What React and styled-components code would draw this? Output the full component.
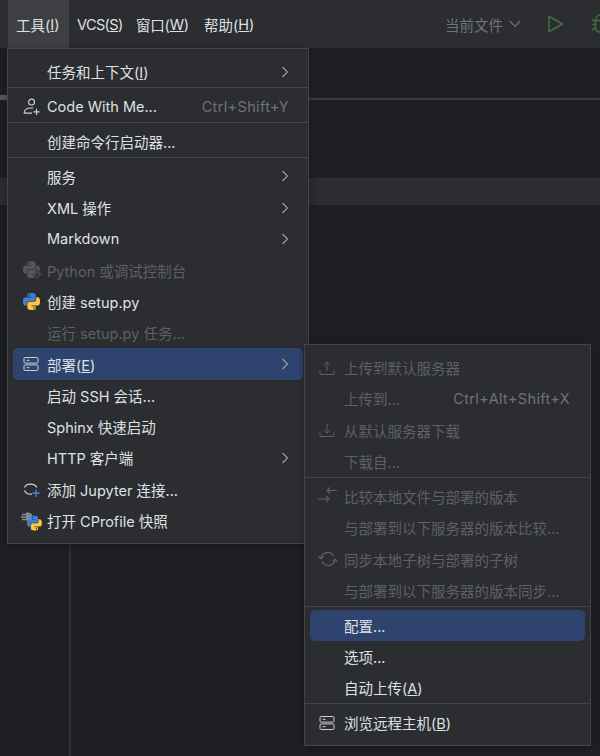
import React from 'react';
import styled, { createGlobalStyle } from 'styled-components';

const Global = createGlobalStyle`
  html, body { margin: 0; padding: 0; background: #1e1f22; }
  * { box-sizing: border-box; }
`;

const Page = styled.div`
  position: relative;
  width: 600px;
  height: 756px;
  overflow: hidden;
  display: flex;
  flex-direction: column;
  background: #1e1f22;
  font-family: "Inter", "Noto Sans CJK SC", sans-serif;
  font-size: 14.5px;
  color: #dfe1e5;
`;

const TitleBar = styled.header`
  flex: none;
  height: 48px;
  display: flex;
  align-items: stretch;
  padding-left: 8px;
  background: #2b2d30;
`;

const MenuTab = styled.div`
  flex: none;
  width: ${p => p.$width}px;
  display: flex;
  align-items: center;
  padding-left: 8px;
  letter-spacing: ${p => p.$tight || 0}px;
  background: ${p => (p.$active ? '#3d3f43' : 'transparent')};
  white-space: nowrap;
`;

const Toolbar = styled.div`
  margin-left: auto;
  display: flex;
  align-items: center;
  flex: none;
  width: 339px;
  margin-right: -184px;
`;

const RunTarget = styled.span`
  color: #6f737a;
  margin-right: 6px;
`;

const ToolIcon = styled.svg`
  flex: none;
  margin-left: ${p => p.$gap || 0}px;
`;

const Workspace = styled.main`
  flex: 1;
  display: flex;
  flex-direction: column;
  min-height: 0;
`;

const TabHeader = styled.div`
  flex: none;
  height: 52px;
  display: flex;
  align-items: flex-end;
`;

const HeaderNub = styled.div`
  width: 8px;
  height: 5px;
  background: #55575b;
`;

const HeaderRule = styled.div`
  flex: 1;
  height: 2px;
  background: #393b40;
`;

const EditorGap = styled.div`
  flex: none;
  height: 78px;
`;

const Band = styled.div`
  flex: none;
  height: 27px;
  background: #2b2d30;
`;

const Lower = styled.div`
  flex: 1;
  display: flex;
`;

const Rail = styled.div`
  width: 71px;
  border-right: 2px solid #2f3135;
`;

const Popup = styled.div`
  position: absolute;
  left: ${p => p.$left}px;
  top: ${p => p.$top}px;
  width: ${p => p.$width}px;
  padding: 7px 5px 7px;
  background: #2b2d30;
  border: 1px solid #43454a;
  box-shadow: 0 2px 8px rgba(0, 0, 0, 0.25);
`;

const Row = styled.div`
  height: 31.3px;
  display: flex;
  align-items: center;
  padding: 0 ${p => (p.$inset ? 15 : 14)}px 0 ${p => (p.$inset ? 9 : 10)}px;
  border-radius: 5px;
  white-space: nowrap;
  background: ${p => (p.$selected ? '#2e436e' : 'transparent')};
  color: ${p => (p.$disabled ? '#5d6066' : '#dfe1e5')};
`;

const IconSlot = styled.span`
  flex: none;
  width: ${p => p.$width}px;
  display: flex;
  align-items: center;
`;

const Shortcut = styled.span`
  margin-left: auto;
  color: #6f737a;
  letter-spacing: 0.35px;
`;

const Arrow = styled.svg`
  margin-left: auto;
  flex: none;
`;

const Separator = styled.div`
  height: 3.6px;
  margin: 0 -5px;
  border-top: 1.6px solid #43454a;
`;

const pyTop = 'M14.25.18l.9.2.73.26.59.3.45.32.34.34.25.34.16.33.1.3.04.26.02.2-.01.13V8.5l-.05.63-.13.55-.21.46-.26.38-.3.31-.33.25-.35.19-.35.14-.33.1-.3.07-.26.04-.21.02H8.77l-.69.05-.59.14-.5.22-.41.27-.33.32-.27.35-.2.36-.15.37-.1.35-.07.32-.04.27-.02.21v3.06H3.17l-.21-.03-.28-.07-.32-.12-.35-.18-.36-.26-.36-.36-.35-.46-.32-.59-.28-.73-.21-.88-.14-1.05-.05-1.23.06-1.22.16-1.04.24-.87.32-.71.36-.57.4-.44.42-.33.42-.24.4-.16.36-.1.32-.05.24-.01h.16l.06.01h8.16v-.83H6.18l-.01-2.75-.02-.37.05-.34.11-.31.17-.28.25-.26.31-.23.38-.2.44-.18.51-.15.58-.12.64-.1.71-.06.77-.04.84-.02 1.27.05zm-6.3 1.98l-.23.33-.08.41.08.41.23.34.33.22.41.09.41-.09.33-.22.23-.34.08-.41-.08-.41-.23-.33-.33-.22-.41-.09-.41.09z';
const pyBottom = 'M21.04 6.11l.28.06.32.12.35.18.36.27.36.35.35.47.32.59.28.73.21.88.14 1.04.05 1.23-.06 1.23-.16 1.04-.24.86-.32.71-.36.57-.4.45-.42.33-.42.24-.4.16-.36.09-.32.05-.24.02-.16-.01h-8.22v.82h5.84l.01 2.76.02.36-.05.34-.11.31-.17.29-.25.25-.31.24-.38.2-.44.17-.51.15-.58.13-.64.09-.71.07-.77.04-.84.01-1.27-.04-1.07-.14-.9-.2-.73-.25-.59-.3-.45-.33-.34-.34-.25-.34-.16-.33-.1-.3-.04-.25-.02-.2.01-.13v-5.34l.05-.64.13-.54.21-.46.26-.38.3-.32.33-.24.35-.2.35-.14.33-.1.3-.06.26-.04.21-.02.13-.01h5.84l.69-.05.59-.14.5-.21.41-.28.33-.32.27-.35.2-.36.15-.36.1-.35.07-.32.04-.28.02-.21V6.07h2.09l.14.01zm-6.47 14.25l-.23.33-.08.41.08.41.23.33.33.23.41.08.41-.08.33-.23.23-.33.08-.41-.08-.41-.23-.33-.33-.23-.41-.08-.41.08z';

const Svg = ({ size = 16, children, ...rest }) => (
  <svg width={size} height={size} viewBox="0 0 16 16" fill="none" {...rest}>{children}</svg>
);

const Python = ({ blue = '#3f7fd6', yellow = '#fcc63f' }) => (
  <svg width="17" height="17" viewBox="0 0 24 24">
    <path d={pyTop} fill={blue} />
    <path d={pyBottom} fill={yellow} />
  </svg>
);

const PythonConsole = () => (
  <svg width="19" height="18" viewBox="0 0 27 25">
    <path d={pyTop} fill="#55575c" />
    <path d={pyBottom} fill="#55575c" />
    <path d="M19 13l6 5.5-6 5.5" stroke="#2b2d30" strokeWidth="4" fill="none" />
    <path d="M19 13l6 5.5-6 5.5" stroke="#55575c" strokeWidth="1.6" fill="none" />
  </svg>
);

const UserAdd = () => (
  <Svg size={18}>
    <circle cx="7.6" cy="3.6" r="2.6" stroke="#ced0d6" strokeWidth="1.05" />
    <path d="M1 13.5c0-2.9 2.5-4.6 5.6-4.6h2.6M1 13.5h7" stroke="#ced0d6" strokeWidth="1.05" />
    <path d="M12 9.5v5.5M9.3 12.3h5.5" stroke="#ced0d6" strokeWidth="1.05" />
  </Svg>
);

const Server = () => (
  <Svg>
    <rect x="1" y="1.5" width="14" height="5.6" rx="1.2" stroke="#ced0d6" />
    <rect x="1" y="8.9" width="14" height="5.6" rx="1.2" stroke="#ced0d6" />
    <path d="M3.5 4.3h3M3.5 11.7h3" stroke="#ced0d6" />
  </Svg>
);

const dim = '#5d6066';

const Upload = () => (
  <Svg>
    <path d="M8 11V2M4.5 5.3L8 1.8l3.5 3.5M1 10.5v4h14v-4" stroke={dim} />
  </Svg>
);

const Download = () => (
  <Svg>
    <path d="M8 1.5v9.5M4.5 7.7L8 11.2l3.5-3.5M1 10.5v4h14v-4" stroke={dim} />
  </Svg>
);

const ShiftedIcon = styled.svg`
  margin-left: ${p => p.$shift}px;
`;

const Compare = () => (
  <ShiftedIcon $shift={-1} width="20" height="18" viewBox="0 0 20 18" fill="none">
    <path d="M9 3.5h10M12 .5l-3 3 3 3" stroke={dim} strokeWidth="1.2" />
    <path d="M0 12h11M8 9l3 3-3 3" stroke={dim} strokeWidth="1.2" />
  </ShiftedIcon>
);

const Sync = () => (
  <ShiftedIcon $shift={-1} width="20" height="18" viewBox="0 0 20 18" fill="none">
    <path d="M3 8.5a6.6 6.6 0 0 1 11.5-3.8L16 6M17 9.5a6.6 6.6 0 0 1-11.5 3.8L4 12" stroke={dim} strokeWidth="1.2" />
    <path d="M.6 6.2L3 8.8l2.4-2.4M19.4 11.8L17 9.2l-2.4 2.4" stroke={dim} strokeWidth="1.2" />
  </ShiftedIcon>
);

const Jupyter = () => (
  <svg width="18" height="18" viewBox="0 0 18 18" fill="none">
    <path d="M1.5 7.5C3 3 12 3 13.8 7.5" stroke="#ced0d6" strokeWidth="1.2" />
    <path d="M1.5 10.5c1.2 2.8 4.5 4 7.5 3.6" stroke="#ced0d6" strokeWidth="1.2" />
    <path d="M13 9.5v7.5M9.3 13.2h7.5" stroke="#548af7" strokeWidth="1.2" />
  </svg>
);

const Profile = () => (
  <ShiftedIcon $shift={-2} width="21" height="20" viewBox="0 0 21 20" fill="none">
    <path d="M1 3.5h5M0 6h6M1 8.5h5" stroke="#868a91" strokeWidth="1.3" />
    <path d="M5 1.5h3.5l2.5 2v6H5z" fill="#868a91" />
    <g transform="translate(6 4.6) scale(.62)">
      <path d={pyTop} fill="#3f7fd6" />
      <path d={pyBottom} fill="#fcc63f" />
    </g>
  </ShiftedIcon>
);

const Chevron = () => (
  <Arrow width="8" height="12" viewBox="0 0 8 12" fill="none">
    <path d="M1.5 1l5 5-5 5" stroke="#9da0a8" strokeWidth="1.1" />
  </Arrow>
);

const MenuRow = ({ icon, children, shortcut, sub, selected, disabled, inset }) => (
  <Row $selected={selected} $disabled={disabled} $inset={inset}>
    <IconSlot $width={inset ? 25 : 24}>{icon}</IconSlot>
    <span>{children}</span>
    {shortcut && <Shortcut>{shortcut}</Shortcut>}
    {sub && <Chevron />}
  </Row>
);

export default function App() {
  return (
    <Page>
      <Global />
      <TitleBar>
        <MenuTab $active $width={61}>工具(<u>I</u>)</MenuTab>
        <MenuTab $width={59} $tight={-0.6}>VCS(<u>S</u>)</MenuTab>
        <MenuTab $width={68} $tight={-0.2}>窗口(<u>W</u>)</MenuTab>
        <MenuTab $width={66}>帮助(<u>H</u>)</MenuTab>
        <Toolbar>
          <RunTarget>当前文件</RunTarget>
          <ToolIcon width="12" height="8" viewBox="0 0 12 8" fill="none">
            <path d="M.8 1l5.2 5.5L11.2 1" stroke="#6f737a" strokeWidth="1.2" />
          </ToolIcon>
          <ToolIcon $gap={27} width="16" height="18" viewBox="0 0 16 18" fill="none">
            <path d="M1 1.6L14.6 9 1 16.4z" stroke="#3f6e45" strokeWidth="1.7" strokeLinejoin="round" />
          </ToolIcon>
          <ToolIcon $gap={23} width="26" height="20" viewBox="0 0 20 20" fill="none">
            <path d="M6 6.5V5a4 4 0 0 1 8 0v1.5M5.5 6.5h9v7a4.5 4.5 0 0 1-9 0zM1.5 10.5h4M14.5 10.5h4M2 5.5l3.5 2M18 5.5l-3.5 2M2 16l3.5-2M18 16l-3.5-2" stroke="#3f6e45" strokeWidth="1.5" />
          </ToolIcon>
        </Toolbar>
      </TitleBar>

      <Workspace>
        <TabHeader>
          <HeaderNub />
          <HeaderRule />
        </TabHeader>
        <EditorGap />
        <Band />
        <Lower>
          <Rail />
        </Lower>
      </Workspace>

      <Popup $left={7} $top={48} $width={302}>
        <MenuRow sub>任务和上下文(<u>I</u>)</MenuRow>
        <Separator />
        <MenuRow icon={<UserAdd />} shortcut="Ctrl+Shift+Y">Code With Me...</MenuRow>
        <Separator />
        <MenuRow>创建命令行启动器...</MenuRow>
        <Separator />
        <MenuRow sub>服务</MenuRow>
        <MenuRow sub>XML 操作</MenuRow>
        <MenuRow sub>Markdown</MenuRow>
        <MenuRow disabled icon={<PythonConsole />}>Python 或调试控制台</MenuRow>
        <MenuRow icon={<Python />}>创建 setup.py</MenuRow>
        <MenuRow disabled>运行 setup.py 任务...</MenuRow>
        <MenuRow selected sub icon={<Server />}>部署(<u>E</u>)</MenuRow>
        <MenuRow>启动 SSH 会话...</MenuRow>
        <MenuRow>Sphinx 快速启动</MenuRow>
        <MenuRow sub>HTTP 客户端</MenuRow>
        <MenuRow icon={<Jupyter />}>添加 Jupyter 连接...</MenuRow>
        <MenuRow icon={<Profile />}>打开 CProfile 快照</MenuRow>
      </Popup>

      <Popup $left={304} $top={344} $width={287}>
        <MenuRow inset disabled icon={<Upload />}>上传到默认服务器</MenuRow>
        <MenuRow inset disabled shortcut="Ctrl+Alt+Shift+X">上传到...</MenuRow>
        <MenuRow inset disabled icon={<Download />}>从默认服务器下载</MenuRow>
        <MenuRow inset disabled>下载自...</MenuRow>
        <Separator />
        <MenuRow inset disabled icon={<Compare />}>比较本地文件与部署的版本</MenuRow>
        <MenuRow inset disabled>与部署到以下服务器的版本比较...</MenuRow>
        <MenuRow inset disabled icon={<Sync />}>同步本地子树与部署的子树</MenuRow>
        <MenuRow inset disabled>与部署到以下服务器的版本同步...</MenuRow>
        <Separator />
        <MenuRow inset selected>配置...</MenuRow>
        <MenuRow inset>选项...</MenuRow>
        <MenuRow inset>自动上传(<u>A</u>)</MenuRow>
        <Separator />
        <MenuRow inset icon={<Server />}>浏览远程主机(<u>B</u>)</MenuRow>
      </Popup>
    </Page>
  );
}
